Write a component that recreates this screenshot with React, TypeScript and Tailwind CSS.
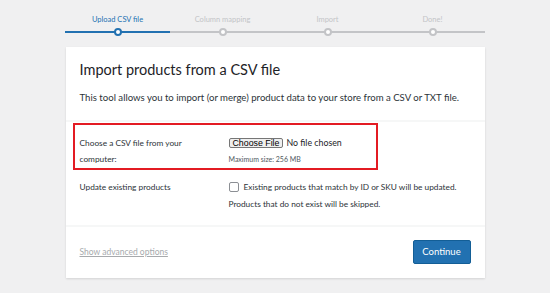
const steps = ['Upload CSV file', 'Column mapping', 'Import', 'Done!'];

const Stepper = () => (
  <div className="flex w-[420px] mx-auto pt-[15px]">
    {steps.map((label, i) => {
      const active = i === 0;
      return (
        <div key={label} className="flex-1 flex flex-col items-center">
          <span
            className={`text-[7.5px] leading-[10px] ${active ? 'text-[#2271b1]' : 'text-[#c3c4c7]'}`}
          >
            {label}
          </span>
          <div className="relative w-full h-[8px] mt-[3px] flex items-center">
            <div className={`w-full h-[2px] ${active ? 'bg-[#2271b1]' : 'bg-[#c3c4c7]'}`} />
            <div
              className={`absolute left-1/2 -translate-x-1/2 w-[8px] h-[8px] rounded-full bg-white border-2 ${active ? 'border-[#2271b1]' : 'border-[#c3c4c7]'}`}
            />
          </div>
        </div>
      );
    })}
  </div>
);

export default function App() {
  return (
    <div
      className="w-[550px] h-[293px] bg-[#f0f0f1] text-[#50575e]"
      style={{ fontFamily: 'Lato, "Noto Sans", sans-serif' }}
    >
      <Stepper />

      <div className="w-[419px] mx-auto mt-[11px] bg-white shadow-[0_1px_2px_rgba(0,0,0,0.12)]">
        {/* header */}
        <div className="px-[14px] pt-[13px] pb-[15px] border-b-2 border-[#f6f7f7]">
          <h1 className="text-[14.5px] leading-[20px] text-[#1d2327]">
            Import products from a CSV file
          </h1>
          <p className="mt-[11px] text-[9.6px] leading-[14px] text-[#2c3338]">
            This tool allows you to import (or merge) product data to your store from a CSV or TXT file.
          </p>
        </div>

        {/* options */}
        <div className="pt-[1px]">
          <div className="ml-[7px] w-[305px] border-2 border-[#e31b23] flex pl-[5px] pt-[10px] pb-[1px]">
            <div className="w-[149px] text-[8.3px] leading-[16px] text-[#2c3338]">
              Choose a CSV file from your
              <br />
              computer:
            </div>
            <div className="flex flex-col">
              <div className="flex items-center h-[16px] gap-[3px]">
                <button
                  className="h-[10px] px-[3px] border border-[#767676] rounded-[2px] bg-[#efefef] text-[#000] text-[8.8px] leading-[8px] flex items-center"
                  style={{ fontFamily: '"Liberation Sans", Arial, sans-serif' }}
                >
                  Choose File
                </button>
                <span className="text-[8.8px] text-[#1d2327]">No file chosen</span>
              </div>
              <span className="mt-[3px] text-[7px] leading-[10px] text-[#50575e]">
                Maximum size: 256 MB
              </span>
            </div>
          </div>

          <div className="flex pl-[14px] pt-[9px] pb-[12px]">
            <div className="w-[149px] text-[8.3px] leading-[17px] text-[#2c3338]">
              Update existing products
            </div>
            <div className="text-[8.3px] leading-[17px] text-[#2c3338]">
              <div>
                <span className="inline-block align-[-2px] w-[10px] h-[10px] mr-[5px] rounded-[2px] border border-[#8c8f94] bg-white" />
                Existing products that match by ID or SKU will be updated.
              </div>
              <div>Products that do not exist will be skipped.</div>
            </div>
          </div>
        </div>

        {/* footer */}
        <div className="border-t-2 border-[#f6f7f7] flex items-center justify-between px-[14px] pt-[13px] pb-[14px]">
          <a className="text-[8.5px] text-[#a7aaad] underline">Show advanced options</a>
          <button className="w-[58px] h-[24px] rounded-[2px] bg-[#2271b1] border border-[#135e96] text-white text-[9.5px]">
            Continue
          </button>
        </div>
      </div>
    </div>
  );
}
